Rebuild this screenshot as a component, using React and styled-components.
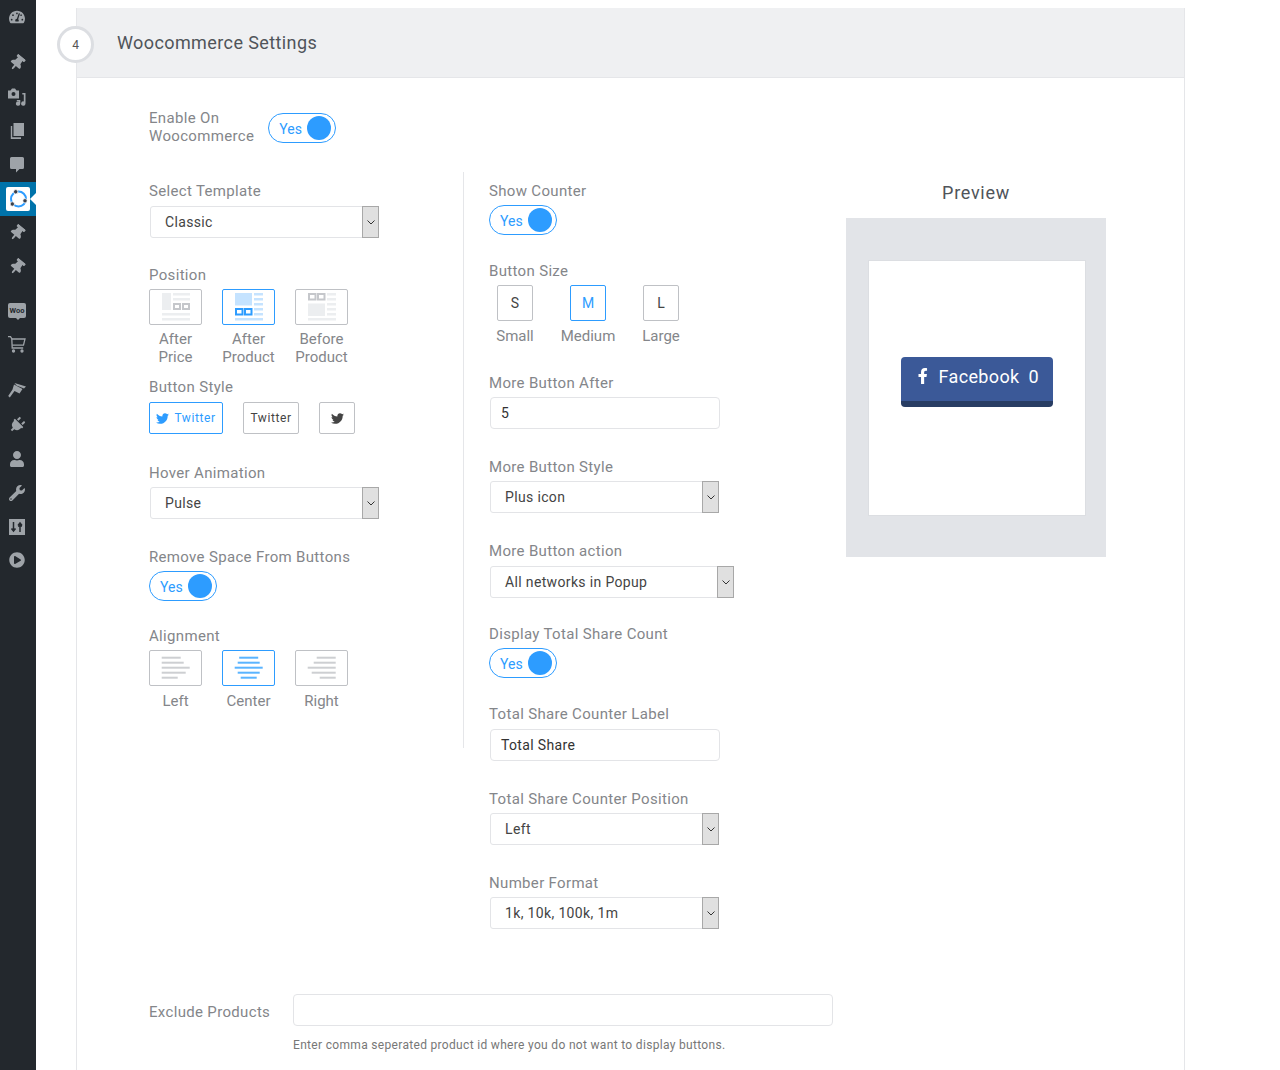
import React from "react";
import styled, { createGlobalStyle } from "styled-components";
import {
  FaTachometerAlt,
  FaThumbtack,
  FaPlug,
  FaUser,
  FaWrench,
  FaPlayCircle,
  FaTwitter,
  FaFacebookF
} from "react-icons/fa";

const GlobalStyle = createGlobalStyle`
  html, body {
    margin: 0;
    padding: 0;
    background: #fff;
  }
  body {
    font-family: Roboto, "Liberation Sans", sans-serif;
    color: #444;
  }
`;

const Page = styled.div`
  display: flex;
  width: 1280px;
  height: 1070px;
  overflow: hidden;
`;

const Sidebar = styled.nav`
  flex: none;
  width: 36px;
  background: #23282d;
  color: #9ea3a8;
`;

const MenuItem = styled.div`
  position: relative;
  display: flex;
  align-items: center;
  justify-content: center;
  box-sizing: border-box;
  height: 34px;
  padding-right: ${p => (p.$active ? 0 : 2)}px;
  margin-top: ${p => p.$top || 0}px;
  background: ${p => (p.$active ? "#0073aa" : "transparent")};
  font-size: 16px;

  ${p =>
    p.$active &&
    `&::after {
      content: "";
      position: absolute;
      right: 0;
      top: 11px;
      border: 6px solid transparent;
      border-right-color: #fff;
    }`}
`;

const LogoBox = styled.div`
  display: flex;
  align-items: center;
  justify-content: center;
  width: 24px;
  height: 24px;
  border-radius: 2px;
  background: #fff;
`;

const WooBadge = styled.span`
  position: relative;
  display: block;
  width: 18px;
  height: 15px;
  border-radius: 2px;
  background: #9ea3a8;
  color: #23282d;
  font-size: 7.500px;
  font-weight: 700;
  line-height: 15px;
  text-align: center;

  &::after {
    content: "";
    position: absolute;
    left: 8px;
    bottom: -2px;
    border: 2px solid transparent;
    border-bottom: 0;
    border-top-color: #9ea3a8;
  }
`;

const Main = styled.main`
  flex: none;
  padding: 8px 0 0 40px;
`;

const Card = styled.section`
  position: relative;
  box-sizing: border-box;
  width: 1109px;
  height: 1062px;
  border: 1px solid #e5e6e9;
  border-top: 0;
  border-bottom: 0;
`;

const Header = styled.header`
  display: flex;
  align-items: center;
  box-sizing: border-box;
  height: 70px;
  padding-left: 40px;
  background: #eff0f2;
  border-bottom: 1px solid #e5e6e9;
`;

const StepBadge = styled.div`
  position: absolute;
  left: -20px;
  top: 18px;
  display: flex;
  align-items: center;
  justify-content: center;
  box-sizing: border-box;
  width: 37px;
  height: 37px;
  border: 3px solid #dcdee2;
  border-radius: 50%;
  background: #fff;
  color: #555;
  font-size: 12px;
`;

const Title = styled.h2`
  margin: 0;
  color: #50545a;
  font-size: 18px;
  font-weight: 400;
  letter-spacing: 0.4px;
  line-height: 24px;
`;

const Body = styled.div`
  padding: 31px 0 0 72px;
`;

const EnableRow = styled.div`
  display: flex;
  align-items: flex-start;
  gap: 14px;
  height: 63px;
`;

const Label = styled.div`
  color: #84868a;
  font-size: 15px;
  letter-spacing: 0.33px;
  line-height: 18px;
  white-space: nowrap;
`;

const EnableToggle = styled.div`
  padding-top: 4px;
`;

const Columns = styled.div`
  display: flex;
  align-items: flex-start;
`;

const LeftColumn = styled.div`
  box-sizing: border-box;
  width: 315px;
  padding: 10px 0 38px;
  border-right: 1px solid #e5e6e9;
`;

const MiddleColumn = styled.div`
  box-sizing: border-box;
  width: 382px;
  padding: 10px 0 0 25px;
`;

const Field = styled.div`
  display: flex;
  flex-direction: column;
  align-items: flex-start;
  gap: ${p => p.$gap || 5}px;
  margin-top: ${p => p.$top || 0}px;
`;

const Toggle = styled.div`
  display: flex;
  align-items: center;
  justify-content: space-between;
  box-sizing: border-box;
  width: 68px;
  height: 30px;
  padding: 0 4px 0 10px;
  border: 1px solid #2d9cff;
  border-radius: 15px;
  background: #fff;
  color: #2d9cff;
  font-size: 14px;
`;

const ToggleText = styled.span`
  padding-top: 2px;
`;

const Knob = styled.span`
  width: 24px;
  height: 24px;
  border-radius: 50%;
  background: #2d9cff;
`;

const SelectBox = styled.div`
  display: flex;
  align-items: stretch;
  box-sizing: border-box;
  width: ${p => p.$width || 229}px;
  height: 32px;
  margin-left: 1px;
  border: 1px solid #e3e4e7;
  border-radius: 3px;
  background: #fff;
  color: #444;
  font-size: 14px;
  letter-spacing: 0.35px;
`;

const SelectValue = styled.span`
  flex: 1;
  padding-left: 14px;
  line-height: 30px;
`;

const SelectArrow = styled.span`
  display: flex;
  align-items: center;
  justify-content: center;
  flex: none;
  box-sizing: border-box;
  width: 17px;
  margin: -1px -1px -1px 0;
  border: 1px solid #a8a8a8;
  background: #e0e0e0;
  color: #333;
`;

const TextInput = styled.div`
  box-sizing: border-box;
  width: ${p => p.$width || 230}px;
  height: 32px;
  margin-left: 1px;
  padding-left: 10px;
  border: 1px solid #e3e4e7;
  border-radius: 4px;
  background: #fff;
  color: #333;
  font-size: 14px;
  letter-spacing: 0.35px;
  line-height: 30px;
`;

const OptionRow = styled.div`
  display: flex;
  gap: 20px;
`;

const Option = styled.div`
  display: flex;
  flex-direction: column;
  align-items: center;
  width: 53px;
`;

const Tile = styled.div`
  display: flex;
  align-items: center;
  justify-content: center;
  box-sizing: border-box;
  width: ${p => p.$width || 53}px;
  height: 36px;
  border: 1px solid ${p => (p.$active ? "#2d9cff" : "#bfc1c5")};
  border-radius: 2px;
  color: ${p => (p.$active ? "#2d9cff" : "#444")};
  font-size: 14px;
`;

const TileSvg = styled.svg`
  display: block;
  flex: none;
  width: 53px;
  height: 36px;
  margin: -1px;
`;

const Caption = styled.div`
  margin-top: ${p => p.$top || 5}px;
  color: #84868a;
  font-size: 15px;
  line-height: 18px;
  text-align: center;
  white-space: nowrap;
`;

const SizeRow = styled.div`
  display: flex;
  gap: 37px;
  margin-left: 8px;
`;

const SizeOption = styled.div`
  display: flex;
  flex-direction: column;
  align-items: center;
  width: 36px;
`;

const StyleRow = styled.div`
  display: flex;
  gap: 20px;
`;

const StyleButton = styled.div`
  display: flex;
  align-items: center;
  justify-content: center;
  gap: 5px;
  box-sizing: border-box;
  width: ${p => p.$width}px;
  height: 32px;
  border: 1px solid ${p => (p.$active ? "#2d9cff" : "#bfc1c5")};
  border-radius: 2px;
  color: ${p => (p.$active ? "#2d9cff" : "#444")};
  font-size: 12px;
  letter-spacing: 0.6px;
`;

const PreviewColumn = styled.div`
  flex: none;
  width: 260px;
  padding-top: 10px;
`;

const PreviewTitle = styled.div`
  margin-bottom: 14px;
  color: #50545a;
  font-size: 18px;
  letter-spacing: 0.7px;
  line-height: 22px;
  text-align: center;
`;

const PreviewStage = styled.div`
  box-sizing: border-box;
  height: 339px;
  padding: 42px 20px 41px 22px;
  background: #e2e4e8;
`;

const PreviewCanvas = styled.div`
  display: flex;
  justify-content: center;
  box-sizing: border-box;
  height: 256px;
  padding-top: 96px;
  border: 1px solid #dcdee2;
  background: #fff;
`;

const ShareButton = styled.div`
  display: flex;
  align-items: center;
  gap: 9px;
  box-sizing: border-box;
  width: 152px;
  height: 50px;
  padding: 0 14px 6px 15px;
  border-bottom: 6px solid #283d63;
  border-radius: 4px;
  background: #3b5998;
  color: #fff;
  font-size: 18px;
  letter-spacing: 0.35px;
`;

const ShareCount = styled.span`
  margin-left: auto;
`;

const ExcludeRow = styled.div`
  display: flex;
  align-items: center;
  margin-top: 65px;
`;

const ExcludeLabel = styled(Label)`
  width: 143px;
  padding-top: 4px;
`;

const Hint = styled.div`
  margin: 11px 0 0 144px;
  color: #777;
  font-size: 12px;
  letter-spacing: 0.32px;
  line-height: 16px;
`;

const Pin = () => <FaThumbtack style={{ transform: "rotate(40deg)" }} />;

const Chevron = () => (
  <svg width="8" height="5" viewBox="0 0 8 5" fill="none" stroke="currentColor" strokeWidth="1">
    <path d="M.5.5 4 4 7.5.5" />
  </svg>
);

const Select = ({ value, width }) => (
  <SelectBox $width={width}>
    <SelectValue>{value}</SelectValue>
    <SelectArrow>
      <Chevron />
    </SelectArrow>
  </SelectBox>
);

const YesToggle = () => (
  <Toggle>
    <ToggleText>Yes</ToggleText>
    <Knob />
  </Toggle>
);

const MediaIcon = () => (
  <svg width="18" height="18" viewBox="0 0 18 18" fill="currentColor">
    <path fillRule="evenodd" d="M0 2.500h2.500L4 .5h3l1.500 2H11v8H0zM5.500 4a2 2 0 1 0 0 4 2 2 0 0 0 0-4z" />
    <path d="M17.500 5v10.500a2.200 2.200 0 1 1-1.700-2.100V6.500h-1.500V5zM8.800 12h3.500v3.500a2.200 2.200 0 1 1-1.700-2.100V13H8.800z" />
  </svg>
);

const PagesIcon = () => (
  <svg width="14" height="16" viewBox="0 0 14 16" fill="currentColor">
    <path d="M3.500 0H14v13H3.500z" />
    <path d="M2.200 3v11.200H11V16H.8V3z" />
  </svg>
);

const BubbleIcon = () => (
  <svg width="14" height="16" viewBox="0 0 14 16" fill="currentColor">
    <path d="M1.500 0h11A1.500 1.500 0 0 1 14 1.500v9a1.500 1.500 0 0 1-1.500 1.500H9.500L6 15.500V12H1.500A1.500 1.500 0 0 1 0 10.500v-9A1.500 1.500 0 0 1 1.500 0z" />
  </svg>
);

const CartIcon = () => (
  <svg width="18" height="17" viewBox="0 0 18 17" fill="none" stroke="currentColor" strokeWidth="1.300">
    <path d="M0 .7h2.500l1.300 2 .4 9.300h11" />
    <path d="M3.800 3H17l-1.500 6.200H4.200" />
    <circle cx="5.500" cy="15" r="1" fill="currentColor" />
    <circle cx="14" cy="15" r="1" fill="currentColor" />
  </svg>
);

const BrushIcon = () => (
  <svg width="18" height="16" viewBox="0 0 18 16" fill="currentColor">
    <path d="M6.500 1 18 4.500l-2 2L8.500 3.500z" />
    <path d="M6 2.500 14.500 7l-3 4.500L6.500 9 1.800 15.500.2 14 4.500 7.500z" />
  </svg>
);

const SlidersIcon = () => (
  <svg width="16" height="16" viewBox="0 0 16 16">
    <path fill="currentColor" d="M0 0h16v16H0z" />
    <path stroke="#23282d" strokeWidth="1.500" fill="none" d="M4.500 3v9M2.500 9.500l2 2.500 2-2.500M11 13V4M9 6.500 11 4l2 2.500M9 7h4" />
  </svg>
);

const ShareLogo = () => (
  <svg width="24" height="24" viewBox="0 0 24 24" fill="none">
    <circle cx="12.500" cy="12" r="7.500" stroke="#2d9cff" strokeWidth="2" />
    <circle cx="9.700" cy="4.800" r="2.200" fill="#3a3f4a" stroke="#fff" strokeWidth="0.8" />
    <circle cx="19" cy="13.800" r="2.200" fill="#3a3f4a" stroke="#fff" strokeWidth="0.8" />
    <circle cx="6.300" cy="17" r="2.200" fill="#3a3f4a" stroke="#fff" strokeWidth="0.8" />
  </svg>
);

const Bars = ({ rects, color }) =>
  rects.map(([x, y, w, h], i) => <rect key={i} x={x} y={y} width={w} height={h} fill={color} />);

const Squares = ({ y, h, color }) => (
  <g fill="none" stroke={color} strokeWidth="2">
    <rect x="14" y={y} width="6.500" height={h} />
    <rect x="23" y={y} width="6.500" height={h} />
  </g>
);

const AfterPriceIcon = () => (
  <TileSvg viewBox="0 0 53 36">
    <Bars
      color="#eceef0"
      rects={[
        [13, 4, 9, 17],
        [24, 4, 17, 2.5],
        [24, 9, 17, 2.5],
        [13, 24, 28, 2.5],
        [13, 29, 28, 2.5]
      ]}
    />
    <g fill="none" stroke="#c5c7cb" strokeWidth="2">
      <rect x="25" y="15" width="6" height="5" />
      <rect x="34" y="15" width="6" height="5" />
    </g>
  </TileSvg>
);

const sideLines = [4, 9, 14, 19, 24].map(y => [32, y, 9, 2.500]);

const AfterProductIcon = () => (
  <TileSvg viewBox="0 0 53 36">
    <Bars color="#c5e3ff" rects={[[13, 4, 17, 12.500], [13, 29, 28, 2.500], ...sideLines]} />
    <Squares y={20} h={5.500} color="#2d9cff" />
  </TileSvg>
);

const BeforeProductIcon = () => (
  <TileSvg viewBox="0 0 53 36">
    <Bars color="#eceef0" rects={[[13, 14.500, 17, 12.500], [13, 29, 28, 2.500], ...sideLines]} />
    <Squares y={5} h={5.500} color="#c5c7cb" />
  </TileSvg>
);

const lineWidths = {
  left: [19, 22, 28, 24, 16],
  center: [19, 22, 28, 22, 16],
  right: [19, 22, 28, 24, 16]
};

const AlignIcon = ({ side, color }) => (
  <TileSvg viewBox="0 0 53 36">
    {lineWidths[side].map((w, i) => {
      const x = side === "left" ? 12.7 : side === "right" ? 40.7 - w : 26.7 - w / 2;
      return <rect key={i} x={x} y={6.700 + i * 5} width={w} height="2" fill={color} />;
    })}
  </TileSvg>
);

export default function App() {
  return (
    <Page>
      <GlobalStyle />
      <Sidebar>
        <MenuItem><FaTachometerAlt /></MenuItem>
        <MenuItem $top={12}><Pin /></MenuItem>
        <MenuItem><MediaIcon /></MenuItem>
        <MenuItem><PagesIcon /></MenuItem>
        <MenuItem><BubbleIcon /></MenuItem>
        <MenuItem $active>
          <LogoBox><ShareLogo /></LogoBox>
        </MenuItem>
        <MenuItem><Pin /></MenuItem>
        <MenuItem><Pin /></MenuItem>
        <MenuItem $top={9}><WooBadge>Woo</WooBadge></MenuItem>
        <MenuItem><CartIcon /></MenuItem>
        <MenuItem $top={12}><BrushIcon /></MenuItem>
        <MenuItem $top={1}><FaPlug style={{ transform: "rotate(45deg)" }} /></MenuItem>
        <MenuItem><FaUser /></MenuItem>
        <MenuItem><FaWrench /></MenuItem>
        <MenuItem><SlidersIcon /></MenuItem>
        <MenuItem $top={-1}><FaPlayCircle /></MenuItem>
      </Sidebar>
      <Main>
        <Card>
          <StepBadge>4</StepBadge>
          <Header>
            <Title>Woocommerce Settings</Title>
          </Header>
          <Body>
            <EnableRow>
              <Label>Enable On<br />Woocommerce</Label>
              <EnableToggle><YesToggle /></EnableToggle>
            </EnableRow>
            <Columns>
              <LeftColumn>
                <Field $gap={6}>
                  <Label>Select Template</Label>
                  <Select value="Classic" />
                </Field>
                <Field $top={28}>
                  <Label>Position</Label>
                  <OptionRow>
                    <Option>
                      <Tile><AfterPriceIcon /></Tile>
                      <Caption>After<br />Price</Caption>
                    </Option>
                    <Option>
                      <Tile $active><AfterProductIcon /></Tile>
                      <Caption>After<br />Product</Caption>
                    </Option>
                    <Option>
                      <Tile><BeforeProductIcon /></Tile>
                      <Caption>Before<br />Product</Caption>
                    </Option>
                  </OptionRow>
                </Field>
                <Field $top={12} $gap={6}>
                  <Label>Button Style</Label>
                  <StyleRow>
                    <StyleButton $width={74} $active><FaTwitter size={13} /> Twitter</StyleButton>
                    <StyleButton $width={56}>Twitter</StyleButton>
                    <StyleButton $width={36}><FaTwitter size={13} /></StyleButton>
                  </StyleRow>
                </Field>
                <Field $top={30}>
                  <Label>Hover Animation</Label>
                  <Select value="Pulse" />
                </Field>
                <Field $top={29}>
                  <Label>Remove Space From Buttons</Label>
                  <YesToggle />
                </Field>
                <Field $top={26}>
                  <Label>Alignment</Label>
                  <OptionRow>
                    <Option>
                      <Tile><AlignIcon side="left" color="#cdcfd2" /></Tile>
                      <Caption $top={6}>Left</Caption>
                    </Option>
                    <Option>
                      <Tile $active><AlignIcon side="center" color="#5ab4ff" /></Tile>
                      <Caption $top={6}>Center</Caption>
                    </Option>
                    <Option>
                      <Tile><AlignIcon side="right" color="#cdcfd2" /></Tile>
                      <Caption $top={6}>Right</Caption>
                    </Option>
                  </OptionRow>
                </Field>
              </LeftColumn>
              <MiddleColumn>
                <Field>
                  <Label>Show Counter</Label>
                  <YesToggle />
                </Field>
                <Field $top={27}>
                  <Label>Button Size</Label>
                  <SizeRow>
                    <SizeOption>
                      <Tile $width={36}>S</Tile>
                      <Caption $top={6}>Small</Caption>
                    </SizeOption>
                    <SizeOption>
                      <Tile $width={36} $active>M</Tile>
                      <Caption $top={6}>Medium</Caption>
                    </SizeOption>
                    <SizeOption>
                      <Tile $width={36}>L</Tile>
                      <Caption $top={6}>Large</Caption>
                    </SizeOption>
                  </SizeRow>
                </Field>
                <Field $top={29}>
                  <Label>More Button After</Label>
                  <TextInput>5</TextInput>
                </Field>
                <Field $top={29}>
                  <Label>More Button Style</Label>
                  <Select value="Plus icon" />
                </Field>
                <Field $top={29} $gap={6}>
                  <Label>More Button action</Label>
                  <Select value="All networks in Popup" width={244} />
                </Field>
                <Field $top={27}>
                  <Label>Display Total Share Count</Label>
                  <YesToggle />
                </Field>
                <Field $top={27} $gap={6}>
                  <Label>Total Share Counter Label</Label>
                  <TextInput>Total Share</TextInput>
                </Field>
                <Field $top={29}>
                  <Label>Total Share Counter Position</Label>
                  <Select value="Left" />
                </Field>
                <Field $top={29}>
                  <Label>Number Format</Label>
                  <Select value="1k, 10k, 100k, 1m" />
                </Field>
              </MiddleColumn>
              <PreviewColumn>
                <PreviewTitle>Preview</PreviewTitle>
                <PreviewStage>
                  <PreviewCanvas>
                    <ShareButton>
                      <FaFacebookF size={16} />
                      Facebook
                      <ShareCount>0</ShareCount>
                    </ShareButton>
                  </PreviewCanvas>
                </PreviewStage>
              </PreviewColumn>
            </Columns>
            <ExcludeRow>
              <ExcludeLabel>Exclude Products</ExcludeLabel>
              <TextInput $width={540} />
            </ExcludeRow>
            <Hint>Enter comma seperated product id where you do not want to display buttons.</Hint>
          </Body>
        </Card>
      </Main>
    </Page>
  );
}
